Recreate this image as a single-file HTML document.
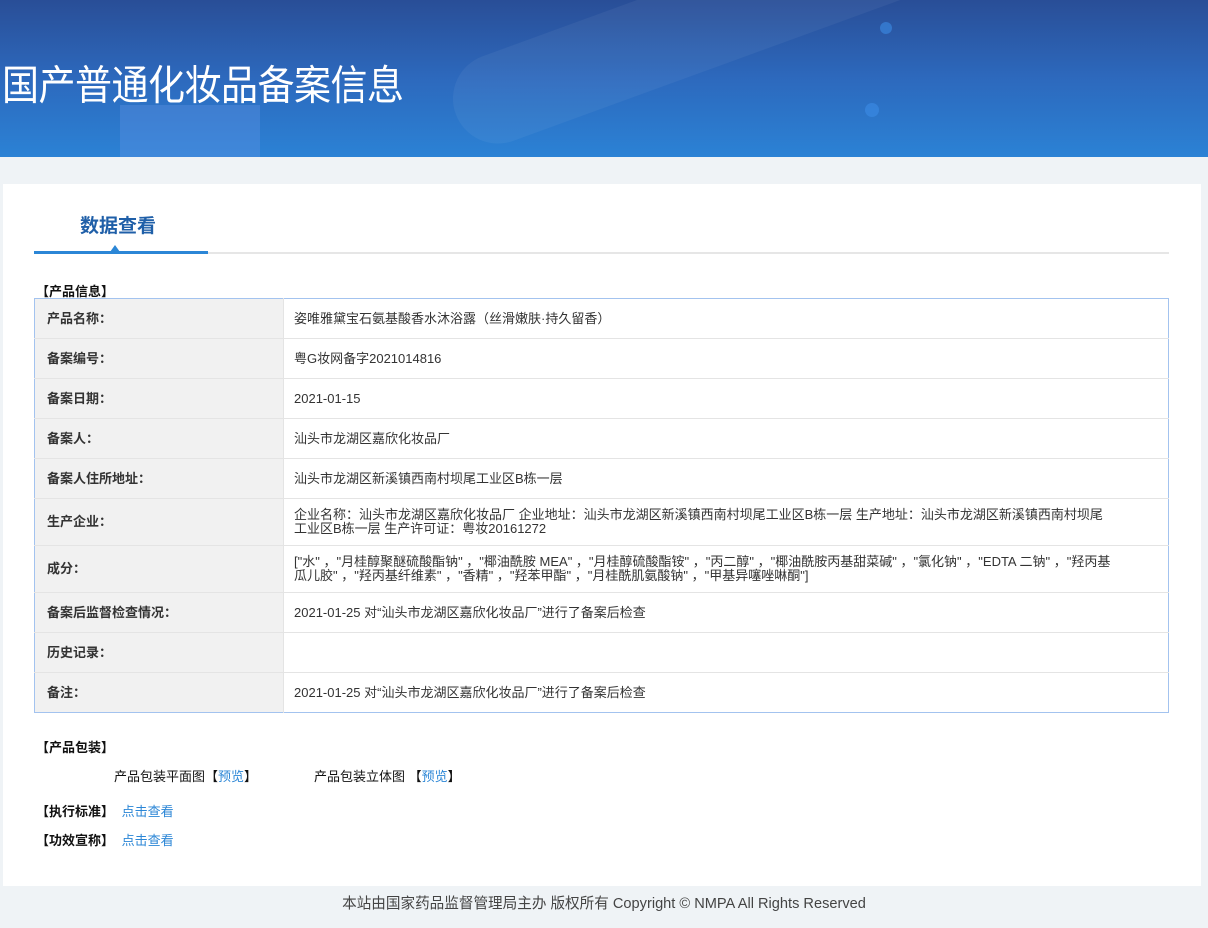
<!DOCTYPE html>
<html><head><meta charset="utf-8"><style>
*{margin:0;padding:0;box-sizing:border-box}
body{width:1208px;height:928px;background:#eff3f6;font-family:"Liberation Sans","Noto Sans CJK SC",sans-serif;font-size:13px;color:#333;position:relative;overflow:hidden}
.banner{position:absolute;left:0;top:0;width:1208px;height:157px;background:linear-gradient(180deg,#294e97 0%,#2d69bd 50%,#2b82d5 100%);overflow:hidden}
.banner h1{position:absolute;left:2px;top:60px;font-size:37px;font-weight:normal;color:#fff;letter-spacing:-0.5px;font-family:"Noto Sans CJK SC",sans-serif;line-height:44px;transform:scaleY(1.1);transform-origin:left center}
.panel{position:absolute;left:3px;top:184px;width:1198px;height:702px;background:#fff}
.tab{position:absolute;left:80px;top:211px;font-size:19px;font-weight:bold;color:#1f5fa8}
.line{position:absolute;left:34px;top:252px;width:1135px;height:2px;background:#e6e6e6}
.line2{position:absolute;left:34px;top:251px;width:174px;height:3px;background:#2b86d6}
.tri{position:absolute;left:110px;top:245px;width:0;height:0;border-left:5px solid transparent;border-right:5px solid transparent;border-bottom:7px solid #2b86d6}
.sec{position:absolute;font-weight:bold;color:#111;font-size:13px}
table{position:absolute;left:34px;top:298px;width:1135px;border-collapse:collapse;border:1px solid #a3c3ef}
td{border-top:1px solid #e4e4e4;height:40px;padding:0 55px 0 10px;vertical-align:middle;line-height:14px}
td.l{width:249px;background:#f1f1f1;font-weight:bold;color:#333;padding:0 0 0 12px;border-right:1px solid #e4e4e4}
tr.t td{height:47px}
a{color:#2b86d6;text-decoration:none}
.foot{position:absolute;top:892px;left:0;width:1208px;text-align:center;font-size:14.6px;color:#444}
</style></head><body>
<div class="banner">
<div style="position:absolute;left:440px;top:-20px;width:520px;height:90px;border-radius:45px;background:rgba(255,255,255,.05);transform:rotate(-20deg)"></div>
<div style="position:absolute;left:120px;top:105px;width:140px;height:60px;background:rgba(100,150,230,.35)"></div>
<div style="position:absolute;left:880px;top:22px;width:12px;height:12px;border-radius:6px;background:rgba(60,140,230,.6)"></div>
<div style="position:absolute;left:865px;top:103px;width:14px;height:14px;border-radius:7px;background:rgba(60,140,230,.6)"></div>
<h1>国产普通化妆品备案信息</h1></div>
<div class="panel"></div>
<div class="tab">数据查看</div>
<div class="line"></div><div class="line2"></div><div class="tri"></div>
<div class="sec" style="left:36px;top:281px">【产品信息】</div>
<table>
<tr><td class="l" style="border-top:none">产品名称：</td><td style="border-top:none">姿唯雅黛宝石氨基酸香水沐浴露（丝滑嫩肤·持久留香）</td></tr>
<tr><td class="l">备案编号：</td><td>粤G妆网备字2021014816</td></tr>
<tr><td class="l">备案日期：</td><td>2021-01-15</td></tr>
<tr><td class="l">备案人：</td><td>汕头市龙湖区嘉欣化妆品厂</td></tr>
<tr><td class="l">备案人住所地址：</td><td>汕头市龙湖区新溪镇西南村坝尾工业区B栋一层</td></tr>
<tr class="t"><td class="l">生产企业：</td><td>企业名称：汕头市龙湖区嘉欣化妆品厂 企业地址：汕头市龙湖区新溪镇西南村坝尾工业区B栋一层 生产地址：汕头市龙湖区新溪镇西南村坝尾工业区B栋一层 生产许可证：粤妆20161272</td></tr>
<tr class="t"><td class="l">成分：</td><td>["水" ，"月桂醇聚醚硫酸酯钠" ，"椰油酰胺 MEA" ，"月桂醇硫酸酯铵" ，"丙二醇" ，"椰油酰胺丙基甜菜碱" ，"氯化钠" ，"EDTA 二钠" ，"羟丙基瓜儿胶" ，"羟丙基纤维素" ，"香精" ，"羟苯甲酯" ，"月桂酰肌氨酸钠" ，"甲基异噻唑啉酮"]</td></tr>
<tr><td class="l">备案后监督检查情况：</td><td>2021-01-25 对“汕头市龙湖区嘉欣化妆品厂”进行了备案后检查</td></tr>
<tr><td class="l">历史记录：</td><td></td></tr>
<tr><td class="l">备注：</td><td>2021-01-25 对“汕头市龙湖区嘉欣化妆品厂”进行了备案后检查</td></tr>
</table>
<div class="sec" style="left:36px;top:737px">【产品包装】</div>
<div style="position:absolute;left:114px;top:766px;color:#111">产品包装平面图【<a>预览</a>】</div>
<div style="position:absolute;left:314px;top:766px;color:#111">产品包装立体图 【<a>预览</a>】</div>
<div class="sec" style="left:36px;top:801px">【执行标准】 <a style="font-weight:normal;margin-left:4px">点击查看</a></div>
<div class="sec" style="left:36px;top:830px">【功效宣称】 <a style="font-weight:normal;margin-left:4px">点击查看</a></div>
<div class="foot">本站由国家药品监督管理局主办 版权所有 Copyright © NMPA All Rights Reserved</div>
</body></html>
